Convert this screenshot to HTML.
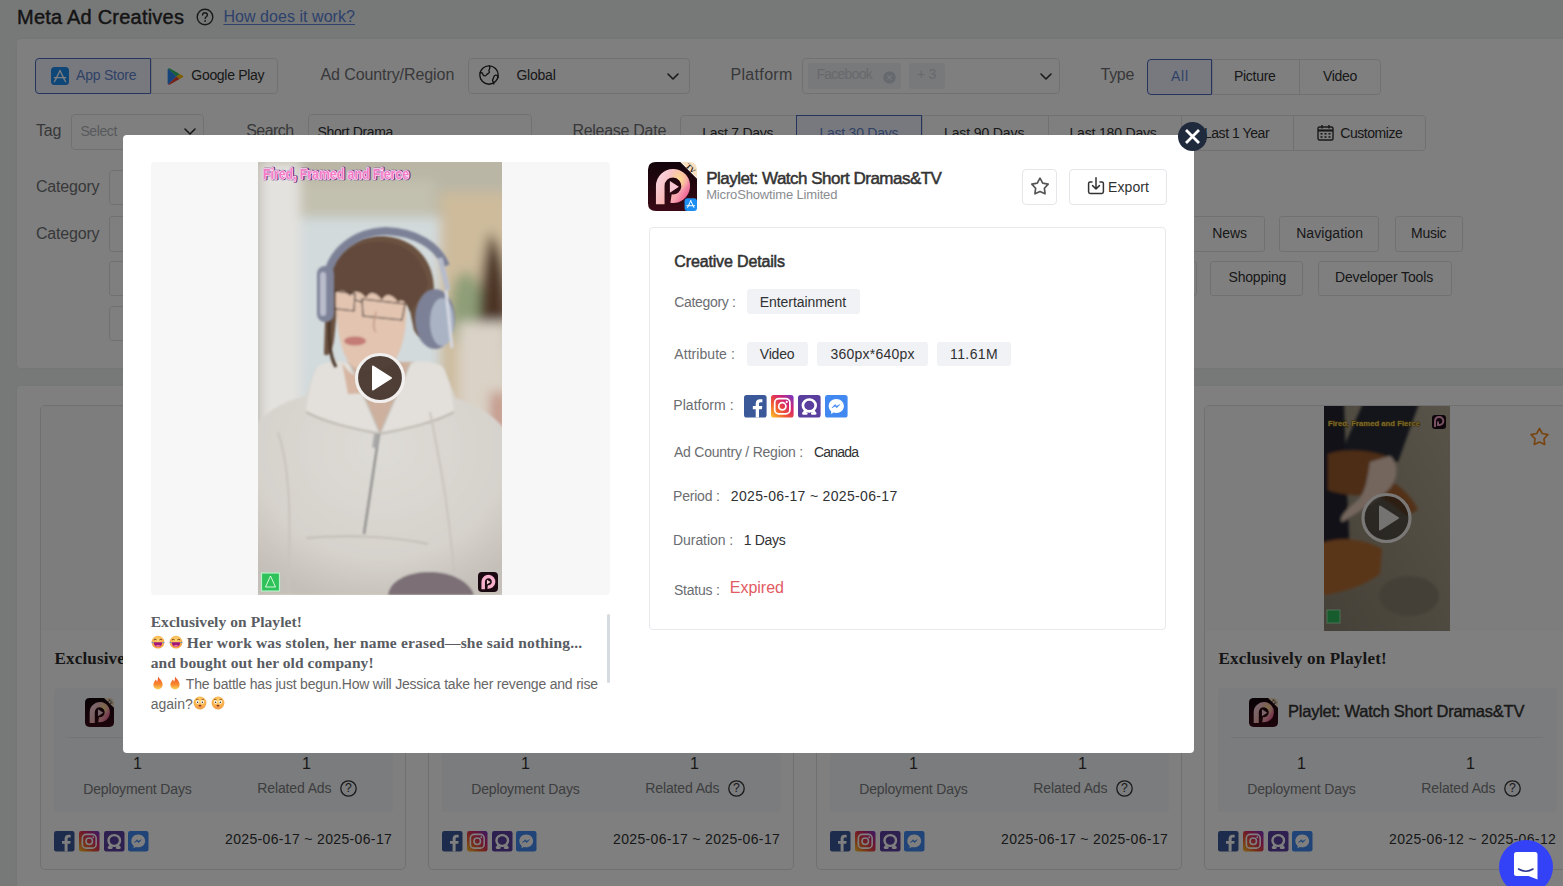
<!DOCTYPE html>
<html><head><meta charset="utf-8"><title>Meta Ad Creatives</title>
<style>
html,body{margin:0;padding:0;}
body{width:1563px;height:886px;overflow:hidden;position:relative;font-family:"Liberation Sans",sans-serif;}
.t{position:absolute;white-space:nowrap;line-height:1;}
.b{position:absolute;box-sizing:border-box;}
.s{position:absolute;overflow:visible;}
.emo{display:inline-block;position:relative;vertical-align:-1px;}
</style></head><body>
<div class="b" style="left:0.00px;top:0.00px;width:1563.00px;height:886.00px;background:#eff2f1;"></div>
<span id="t1" class="t" style="left:17.00px;top:6.77px;font-size:20px;color:#2a2a2a;font-weight:400;font-family:'Liberation Sans', sans-serif;letter-spacing:0.218px;-webkit-text-stroke:0.45px #2a2a2a;">Meta Ad Creatives</span>
<svg class="s" style="left:196.00px;top:8.00px;" width="18" height="18" viewBox="0 0 18 18"><circle cx="9" cy="9" r="7.8" fill="none" stroke="#333" stroke-width="1.4"/><path d="M6.6 7.1c0-1.4 1.1-2.3 2.4-2.3s2.4.9 2.4 2.2c0 1.7-2.3 1.9-2.3 3.6" fill="none" stroke="#333" stroke-width="1.4" stroke-linecap="round"/><circle cx="9.1" cy="13" r=".9" fill="#333"/></svg>
<span id="t2" class="t" style="left:223.50px;top:9.06px;font-size:16px;color:#5a82d8;font-weight:400;font-family:'Liberation Sans', sans-serif;letter-spacing:0.042px;text-decoration:underline;text-underline-offset:2px;">How does it work?</span>
<div class="b" style="left:17.00px;top:39.00px;width:1583.00px;height:329.00px;background:#fff;border-radius:4px;box-shadow:0 0 3px rgba(0,0,0,0.06);"></div>
<div class="b" style="left:151.00px;top:58.00px;width:127.00px;height:36.00px;background:#fff;border:1px solid #e2e3e6;border-radius:0 4px 4px 0;"></div>
<div class="b" style="left:35.00px;top:58.00px;width:116.00px;height:36.00px;background:#eef3ff;border:1px solid #4a6bbd;border-radius:4px 0 0 4px;"></div>
<svg class="s" style="left:51.00px;top:67.00px;" width="18" height="18" viewBox="0 0 18 18"><rect width="18" height="18" rx="3.5" fill="#1e8cf0"/><path d="M9 3.5 L4.6 12.6 M9 3.5 L13.4 12.6 M3.3 10.6 H14.7" stroke="#fff" stroke-width="1.3" stroke-linecap="round" fill="none"/><path d="M4.2 13.3 l-0.8 1.4 M13.8 13.3 l0.8 1.4" stroke="#fff" stroke-width="1.3" stroke-linecap="round"/></svg>
<span id="t3" class="t" style="left:76.00px;top:68.15px;font-size:14px;color:#6283cc;font-weight:400;font-family:'Liberation Sans', sans-serif;letter-spacing:-0.209px;">App Store</span>
<svg class="s" style="left:165.50px;top:66.50px;" width="19" height="19" viewBox="0 0 19 19"><path d="M2.2 1.5 Q1.6 1.9 1.6 2.8 V16.2 Q1.6 17.1 2.2 17.5 L10.5 9.5 Z" fill="#2f86f6"/><path d="M2.2 1.5 Q3 1 4 1.6 L13.6 7 L10.5 9.5 Z" fill="#2dbf6c"/><path d="M2.2 17.5 Q3 18 4 17.4 L13.6 12 L10.5 9.5 Z" fill="#ea4335"/><path d="M13.6 7 L16.9 8.8 Q18 9.5 16.9 10.2 L13.6 12 L10.5 9.5 Z" fill="#fbbc04"/></svg>
<span id="t4" class="t" style="left:191.30px;top:68.15px;font-size:14px;color:#303133;font-weight:400;font-family:'Liberation Sans', sans-serif;letter-spacing:-0.297px;">Google Play</span>
<span id="t5" class="t" style="left:320.40px;top:66.66px;font-size:16px;color:#707174;font-weight:400;font-family:'Liberation Sans', sans-serif;letter-spacing:-0.081px;">Ad Country/Region</span>
<div class="b" style="left:468.00px;top:58.00px;width:222.00px;height:36.00px;background:#fff;border:1px solid #e2e3e6;border-radius:4px;"></div>
<svg class="s" style="left:479.00px;top:65.00px;" width="21" height="21" viewBox="0 0 21 21"><circle cx="10" cy="10" r="9.2" fill="none" stroke="#222" stroke-width="1.35"/><path d="M10.5 0.8 C11.4 2.5 10.9 3.6 10 5 C9.5 6 11 6.6 10.2 7.6 C9.4 8.6 8.2 8.8 7.4 10 C6.6 11.2 5 11.2 4.3 10.2 C3.6 9.2 3.8 7.6 2.6 7.7 L0.9 8 M19.4 12.3 C18.6 10.8 17.8 10 16.6 10.2 C15.4 10.5 14.8 11.4 14.6 12.6 C14.4 13.8 13.2 14.4 13.6 15.6 C13.9 16.6 14.8 17.2 14.8 18.9" fill="none" stroke="#222" stroke-width="1.35" stroke-linecap="round" stroke-linejoin="round"/></svg>
<span id="t6" class="t" style="left:516.40px;top:68.15px;font-size:14px;color:#303133;font-weight:400;font-family:'Liberation Sans', sans-serif;letter-spacing:-0.212px;">Global</span>
<svg class="s" style="left:667.00px;top:72.50px;" width="12" height="8" viewBox="0 0 12 8"><path d="M1 1 L6 6 L11 1" fill="none" stroke="#333" stroke-width="1.6" stroke-linecap="round" stroke-linejoin="round"/></svg>
<span id="t7" class="t" style="left:730.50px;top:66.66px;font-size:16px;color:#707174;font-weight:400;font-family:'Liberation Sans', sans-serif;letter-spacing:0.323px;">Platform</span>
<div class="b" style="left:802.00px;top:58.00px;width:258.00px;height:36.00px;background:#fff;border:1px solid #e2e3e6;border-radius:4px;"></div>
<div class="b" style="left:808.00px;top:63.00px;width:93.00px;height:25.50px;background:#f0f2f6;border-radius:3px;"></div>
<span id="t8" class="t" style="left:816.40px;top:67.15px;font-size:14px;color:#d0d3da;font-weight:400;font-family:'Liberation Sans', sans-serif;letter-spacing:-0.726px;">Facebook</span>
<svg class="s" style="left:883.00px;top:70.50px;" width="13" height="13" viewBox="0 0 13 13"><circle cx="6.5" cy="6.5" r="6.2" fill="#cdd2dc"/><path d="M4.3 4.3 L8.7 8.7 M8.7 4.3 L4.3 8.7" stroke="#f0f2f6" stroke-width="1.2"/></svg>
<div class="b" style="left:909.00px;top:63.00px;width:35.50px;height:25.50px;background:#f0f2f6;border-radius:3px;"></div>
<span id="t9" class="t" style="left:917.00px;top:67.15px;font-size:14px;color:#d0d3da;font-weight:400;font-family:'Liberation Sans', sans-serif;letter-spacing:-0.283px;">+ 3</span>
<svg class="s" style="left:1040.00px;top:72.50px;" width="12" height="8" viewBox="0 0 12 8"><path d="M1 1 L6 6 L11 1" fill="none" stroke="#333" stroke-width="1.6" stroke-linecap="round" stroke-linejoin="round"/></svg>
<span id="t10" class="t" style="left:1100.50px;top:66.66px;font-size:16px;color:#707174;font-weight:400;font-family:'Liberation Sans', sans-serif;letter-spacing:-0.263px;">Type</span>
<div class="b" style="left:1212.00px;top:58.50px;width:169.00px;height:36.00px;background:#fff;border:1px solid #e2e3e6;border-radius:0 4px 4px 0;"></div>
<div class="b" style="left:1299.00px;top:58.50px;width:1.00px;height:36.00px;background:#e2e3e6;"></div>
<div class="b" style="left:1147.00px;top:58.50px;width:65.00px;height:36.00px;background:#eef3ff;border:1px solid #4a6bbd;border-radius:4px 0 0 4px;"></div>
<span id="t11" class="t" style="left:1171.00px;top:69.15px;font-size:14px;color:#6283cc;font-weight:400;font-family:'Liberation Sans', sans-serif;letter-spacing:0.776px;">All</span>
<span id="t12" class="t" style="left:1234.00px;top:69.15px;font-size:14px;color:#303133;font-weight:400;font-family:'Liberation Sans', sans-serif;letter-spacing:-0.298px;">Picture</span>
<span id="t13" class="t" style="left:1323.00px;top:69.15px;font-size:14px;color:#303133;font-weight:400;font-family:'Liberation Sans', sans-serif;letter-spacing:-0.342px;">Video</span>
<span id="t14" class="t" style="left:36.00px;top:122.96px;font-size:16px;color:#707174;font-weight:400;font-family:'Liberation Sans', sans-serif;letter-spacing:-0.199px;">Tag</span>
<div class="b" style="left:70.80px;top:114.30px;width:133.50px;height:35.70px;background:#fff;border:1px solid #e2e3e6;border-radius:4px;"></div>
<span id="t15" class="t" style="left:80.40px;top:124.15px;font-size:14px;color:#b0b3b8;font-weight:400;font-family:'Liberation Sans', sans-serif;letter-spacing:-0.404px;">Select</span>
<svg class="s" style="left:183.50px;top:128.00px;" width="12" height="8" viewBox="0 0 12 8"><path d="M1 1 L6 6 L11 1" fill="none" stroke="#333" stroke-width="1.6" stroke-linecap="round" stroke-linejoin="round"/></svg>
<span id="t16" class="t" style="left:246.20px;top:123.46px;font-size:16px;color:#707174;font-weight:400;font-family:'Liberation Sans', sans-serif;letter-spacing:-0.559px;">Search</span>
<div class="b" style="left:308.00px;top:114.30px;width:223.50px;height:35.70px;background:#fff;border:1px solid #e2e3e6;border-radius:4px;"></div>
<span id="t17" class="t" style="left:317.50px;top:125.15px;font-size:14px;color:#303133;font-weight:400;font-family:'Liberation Sans', sans-serif;letter-spacing:-0.357px;">Short Drama</span>
<span id="t18" class="t" style="left:572.40px;top:123.46px;font-size:16px;color:#707174;font-weight:400;font-family:'Liberation Sans', sans-serif;letter-spacing:-0.277px;">Release Date</span>
<div class="b" style="left:679.70px;top:115.00px;width:746.30px;height:35.50px;background:#fff;border:1px solid #e2e3e6;border-radius:4px;"></div>
<div class="b" style="left:796.20px;top:115.00px;width:1.00px;height:35.50px;background:#e2e3e6;"></div>
<div class="b" style="left:921.60px;top:115.00px;width:1.00px;height:35.50px;background:#e2e3e6;"></div>
<div class="b" style="left:1047.50px;top:115.00px;width:1.00px;height:35.50px;background:#e2e3e6;"></div>
<div class="b" style="left:1180.50px;top:115.00px;width:1.00px;height:35.50px;background:#e2e3e6;"></div>
<div class="b" style="left:1293.20px;top:115.00px;width:1.00px;height:35.50px;background:#e2e3e6;"></div>
<span id="t19" class="t" style="left:702.30px;top:126.15px;font-size:14px;color:#303133;font-weight:400;font-family:'Liberation Sans', sans-serif;letter-spacing:-0.262px;">Last 7 Days</span>
<div class="b" style="left:796.20px;top:115.00px;width:125.40px;height:35.50px;background:#eef3ff;border:1px solid #4a6bbd;"></div>
<span id="t20" class="t" style="left:819.50px;top:126.15px;font-size:14px;color:#6283cc;font-weight:400;font-family:'Liberation Sans', sans-serif;letter-spacing:-0.246px;">Last 30 Days</span>
<span id="t21" class="t" style="left:944.00px;top:126.15px;font-size:14px;color:#303133;font-weight:400;font-family:'Liberation Sans', sans-serif;letter-spacing:-0.119px;">Last 90 Days</span>
<span id="t22" class="t" style="left:1069.50px;top:126.15px;font-size:14px;color:#303133;font-weight:400;font-family:'Liberation Sans', sans-serif;letter-spacing:-0.183px;">Last 180 Days</span>
<span id="t23" class="t" style="left:1203.90px;top:126.15px;font-size:14px;color:#303133;font-weight:400;font-family:'Liberation Sans', sans-serif;letter-spacing:-0.435px;">Last 1 Year</span>
<span id="t24" class="t" style="left:1340.30px;top:126.15px;font-size:14px;color:#303133;font-weight:400;font-family:'Liberation Sans', sans-serif;letter-spacing:-0.456px;">Customize</span>
<svg class="s" style="left:1317.00px;top:123.50px;" width="17" height="17" viewBox="0 0 17 17"><rect x="1" y="3" width="15" height="13" rx="1.5" fill="none" stroke="#333" stroke-width="1.4"/><path d="M1 6.5 H16" stroke="#333" stroke-width="2.2"/><path d="M5 1 V4.5 M12 1 V4.5" stroke="#333" stroke-width="1.5"/><g fill="#333"><rect x="3.5" y="9" width="2" height="1.6"/><rect x="7.5" y="9" width="2" height="1.6"/><rect x="11.5" y="9" width="2" height="1.6"/><rect x="3.5" y="12.2" width="2" height="1.6"/><rect x="7.5" y="12.2" width="2" height="1.6"/><rect x="11.5" y="12.2" width="2" height="1.6"/></g></svg>
<span id="t25" class="t" style="left:36.00px;top:179.16px;font-size:16px;color:#707174;font-weight:400;font-family:'Liberation Sans', sans-serif;letter-spacing:-0.203px;">Category</span>
<div class="b" style="left:109.40px;top:170.00px;width:310.60px;height:34.50px;background:#fff;border:1px solid #e2e3e6;border-radius:4px;"></div>
<span id="t26" class="t" style="left:36.00px;top:226.16px;font-size:16px;color:#707174;font-weight:400;font-family:'Liberation Sans', sans-serif;letter-spacing:-0.203px;">Category</span>
<div class="b" style="left:109.40px;top:216.00px;width:90.60px;height:36.00px;background:#fff;border:1px solid #e2e3e6;border-radius:3px;"></div>
<div class="b" style="left:215.00px;top:216.00px;width:115.00px;height:36.00px;background:#fff;border:1px solid #e2e3e6;border-radius:3px;"></div>
<div class="b" style="left:345.00px;top:216.00px;width:125.00px;height:36.00px;background:#fff;border:1px solid #e2e3e6;border-radius:3px;"></div>
<div class="b" style="left:485.00px;top:216.00px;width:115.00px;height:36.00px;background:#fff;border:1px solid #e2e3e6;border-radius:3px;"></div>
<div class="b" style="left:615.00px;top:216.00px;width:125.00px;height:36.00px;background:#fff;border:1px solid #e2e3e6;border-radius:3px;"></div>
<div class="b" style="left:755.00px;top:216.00px;width:125.00px;height:36.00px;background:#fff;border:1px solid #e2e3e6;border-radius:3px;"></div>
<div class="b" style="left:895.00px;top:216.00px;width:115.00px;height:36.00px;background:#fff;border:1px solid #e2e3e6;border-radius:3px;"></div>
<div class="b" style="left:1025.00px;top:216.00px;width:125.00px;height:36.00px;background:#fff;border:1px solid #e2e3e6;border-radius:3px;"></div>
<div class="b" style="left:1165.00px;top:216.00px;width:100.10px;height:36.00px;background:#fff;border:1px solid #e2e3e6;border-radius:3px;"></div>
<span id="t27" class="t" style="left:1212.20px;top:226.15px;font-size:14px;color:#303133;font-weight:400;font-family:'Liberation Sans', sans-serif;letter-spacing:-0.069px;">News</span>
<div class="b" style="left:1279.40px;top:216.00px;width:99.80px;height:36.00px;background:#fff;border:1px solid #e2e3e6;border-radius:3px;"></div>
<span id="t28" class="t" style="left:1296.20px;top:226.15px;font-size:14px;color:#303133;font-weight:400;font-family:'Liberation Sans', sans-serif;letter-spacing:0.071px;">Navigation</span>
<div class="b" style="left:1394.60px;top:216.00px;width:68.70px;height:36.00px;background:#fff;border:1px solid #e2e3e6;border-radius:3px;"></div>
<span id="t29" class="t" style="left:1411.00px;top:226.15px;font-size:14px;color:#303133;font-weight:400;font-family:'Liberation Sans', sans-serif;letter-spacing:-0.240px;">Music</span>
<div class="b" style="left:109.40px;top:261.00px;width:120.60px;height:35.00px;background:#fff;border:1px solid #e2e3e6;border-radius:3px;"></div>
<div class="b" style="left:245.00px;top:261.00px;width:145.00px;height:35.00px;background:#fff;border:1px solid #e2e3e6;border-radius:3px;"></div>
<div class="b" style="left:405.00px;top:261.00px;width:125.00px;height:35.00px;background:#fff;border:1px solid #e2e3e6;border-radius:3px;"></div>
<div class="b" style="left:545.00px;top:261.00px;width:155.00px;height:35.00px;background:#fff;border:1px solid #e2e3e6;border-radius:3px;"></div>
<div class="b" style="left:715.00px;top:261.00px;width:145.00px;height:35.00px;background:#fff;border:1px solid #e2e3e6;border-radius:3px;"></div>
<div class="b" style="left:875.00px;top:261.00px;width:125.00px;height:35.00px;background:#fff;border:1px solid #e2e3e6;border-radius:3px;"></div>
<div class="b" style="left:1015.00px;top:261.00px;width:182.00px;height:35.00px;background:#fff;border:1px solid #e2e3e6;border-radius:3px;"></div>
<div class="b" style="left:1210.40px;top:261.00px;width:92.80px;height:35.00px;background:#fff;border:1px solid #e2e3e6;border-radius:3px;"></div>
<span id="t30" class="t" style="left:1228.60px;top:270.15px;font-size:14px;color:#303133;font-weight:400;font-family:'Liberation Sans', sans-serif;letter-spacing:-0.211px;">Shopping</span>
<div class="b" style="left:1318.40px;top:261.00px;width:133.20px;height:35.00px;background:#fff;border:1px solid #e2e3e6;border-radius:3px;"></div>
<span id="t31" class="t" style="left:1335.00px;top:270.15px;font-size:14px;color:#303133;font-weight:400;font-family:'Liberation Sans', sans-serif;letter-spacing:-0.142px;">Developer Tools</span>
<div class="b" style="left:109.40px;top:305.70px;width:140.60px;height:35.00px;background:#fff;border:1px solid #e2e3e6;border-radius:4px;"></div>
<div class="b" style="left:17.00px;top:385.50px;width:1583.00px;height:514.50px;background:#fff;border-radius:4px;box-shadow:0 0 3px rgba(0,0,0,0.06);"></div>
<div class="b" style="left:40.00px;top:405.00px;width:366.00px;height:464.50px;background:#fff;border:1px solid #e0e1e3;border-radius:5px;overflow:hidden;"><div style="position:absolute;left:0;top:0;right:0;height:225px;background:#fafafa"></div></div>
<span id="t32" class="t" style="left:54.50px;top:649.76px;font-size:17px;color:#2b2b2b;font-weight:700;font-family:'Liberation Serif', serif;letter-spacing:0.174px;">Exclusively on Playlet!</span>
<div class="b" style="left:54.00px;top:688.00px;width:339.00px;height:123.50px;background:#f7f8fa;border-radius:4px;"></div>
<svg class="s" style="left:85.00px;top:698.00px" width="29" height="29" viewBox="0 0 50 50"><defs><linearGradient id="pg1" x1="0" y1="0.2" x2="1" y2="0.9"><stop offset="0" stop-color="#f8cdd6"/><stop offset=".55" stop-color="#f7b0a8"/><stop offset=".7" stop-color="#f6a0b0"/><stop offset="1" stop-color="#ee5a90"/></linearGradient><radialGradient id="py1" cx="0.75" cy="0.2" r="0.4"><stop offset="0" stop-color="#fde08a" stop-opacity="0.9"/><stop offset="1" stop-color="#fde08a" stop-opacity="0"/></radialGradient><linearGradient id="bg1" x1="0" y1="0" x2="0" y2="1"><stop offset="0" stop-color="#12040a"/><stop offset="1" stop-color="#3a0a16"/></linearGradient></defs>
<path d="M8 0 H33 L50 17 V42 Q50 50 42 50 H8 Q0 50 0 42 V8 Q0 0 8 0 Z" fill="url(#bg1)"/>
<path d="M12.5 43 V24.5 A13 13 0 1 1 23.5 37.3" fill="none" stroke="url(#pg1)" stroke-width="8.8"/>
<path d="M12.5 43 V24.5 A13 13 0 1 1 23.5 37.3" fill="none" stroke="url(#py1)" stroke-width="8.8"/>
<path d="M22.3 19.3 L31.5 25.3 L22.3 31.4 Z" fill="#f7c8d4"/><path d="M34 0 H42 Q50 0 50 8 V16 Z" fill="#f7dfc0"/><text x="43.5" y="9" font-size="7.5" font-family="Liberation Serif" font-weight="700" fill="#2a1a10" text-anchor="middle" transform="rotate(45 43.5 6.5)">TV</text></svg>
<span id="t33" class="t" style="left:124.00px;top:703.23px;font-size:16.5px;color:#333;font-weight:400;font-family:'Liberation Sans', sans-serif;letter-spacing:-0.238px;-webkit-text-stroke:0.4px #333;">Playlet: Watch Short Dramas&amp;TV</span>
<div class="b" style="left:67.00px;top:737.00px;width:312.00px;height:1.00px;background:#e8e9ec;"></div>
<span id="t34" class="t" style="left:133.00px;top:755.96px;font-size:16px;color:#303133;font-weight:400;font-family:'Liberation Sans', sans-serif;">1</span>
<span id="t35" class="t" style="left:83.25px;top:781.75px;font-size:14px;color:#7a7c80;font-weight:400;font-family:'Liberation Sans', sans-serif;letter-spacing:-0.142px;">Deployment Days</span>
<span id="t36" class="t" style="left:257.30px;top:781.35px;font-size:14px;color:#7a7c80;font-weight:400;font-family:'Liberation Sans', sans-serif;letter-spacing:-0.127px;">Related Ads</span>
<span id="t37" class="t" style="left:302.00px;top:755.96px;font-size:16px;color:#303133;font-weight:400;font-family:'Liberation Sans', sans-serif;">1</span>
<svg class="s" style="left:340.00px;top:780.00px;" width="17" height="17" viewBox="0 0 17 17"><circle cx="8.5" cy="8.5" r="7.7" fill="none" stroke="#333" stroke-width="1.3"/><text x="8.5" y="12.41" font-size="12.24" text-anchor="middle" font-family="Liberation Sans" fill="#333">?</text></svg>
<svg class="s" style="left:54.00px;top:830.50px" width="20.5" height="20.5" viewBox="0 0 22 22"><rect width="22" height="22" rx="2.5" fill="#3b5998"/><path d="M14.6 22 V13.8 H17.4 L17.8 10.6 H14.6 V8.7 C14.6 7.8 14.9 7.1 16.2 7.1 H17.9 V4.2 C17.6 4.2 16.6 4.1 15.5 4.1 C13.1 4.1 11.4 5.6 11.4 8.3 V10.6 H8.6 V13.8 H11.4 V22 Z" fill="#fff"/></svg>
<svg class="s" style="left:78.80px;top:830.50px" width="20.5" height="20.5" viewBox="0 0 22 22"><defs><linearGradient id="igg3" x1="0" y1="1" x2="1" y2="0"><stop offset="0" stop-color="#fdc830"/><stop offset=".35" stop-color="#f0582f"/><stop offset=".65" stop-color="#d6246e"/><stop offset="1" stop-color="#6d3ac9"/></linearGradient></defs><rect width="22" height="22" rx="2.5" fill="url(#igg3)"/><rect x="3.6" y="3.6" width="14.8" height="14.8" rx="4" fill="none" stroke="#fff" stroke-width="1.7"/><circle cx="11" cy="11" r="3.5" fill="none" stroke="#fff" stroke-width="1.7"/><circle cx="15.3" cy="6.7" r="1" fill="#fff"/></svg>
<svg class="s" style="left:103.60px;top:830.50px" width="20.5" height="20.5" viewBox="0 0 22 22"><rect width="22" height="22" rx="2.5" fill="#5a3e9e"/><ellipse cx="11" cy="10.2" rx="6.2" ry="5.8" fill="none" stroke="#fff" stroke-width="2.6"/><path d="M5.2 17.8 l2.2-2.6 M16.8 17.8 l-2.2-2.6 M5.2 18 h3 M13.8 18 h3" stroke="#fff" stroke-width="2.4" stroke-linecap="round"/></svg>
<svg class="s" style="left:128.40px;top:830.50px" width="20.5" height="20.5" viewBox="0 0 22 22"><rect width="22" height="22" rx="2.5" fill="#4189f0"/><path d="M11 3.8c-4.2 0-7.4 3-7.4 6.9 0 2.1.9 3.9 2.4 5.1v2.6l2.3-1.3c.8.2 1.7.4 2.7.4 4.2 0 7.4-3 7.4-6.8S15.2 3.8 11 3.8z" fill="#fff"/><path d="M6.8 12.4 l3-3.1 1.6 1.6 3-1.6-3 3.2-1.6-1.7z" fill="#4189f0" stroke="#4189f0" stroke-width=".6" stroke-linejoin="round"/></svg>
<span id="t38" class="t" style="left:225.00px;top:832.45px;font-size:14px;color:#303133;font-weight:400;font-family:'Liberation Sans', sans-serif;letter-spacing:0.346px;">2025-06-17 ~ 2025-06-17</span>
<div class="b" style="left:428.00px;top:405.00px;width:366.00px;height:464.50px;background:#fff;border:1px solid #e0e1e3;border-radius:5px;overflow:hidden;"><div style="position:absolute;left:0;top:0;right:0;height:225px;background:#fafafa"></div></div>
<span id="t39" class="t" style="left:442.50px;top:649.76px;font-size:17px;color:#2b2b2b;font-weight:700;font-family:'Liberation Serif', serif;letter-spacing:0.174px;">Exclusively on Playlet!</span>
<div class="b" style="left:442.00px;top:688.00px;width:339.00px;height:123.50px;background:#f7f8fa;border-radius:4px;"></div>
<svg class="s" style="left:473.00px;top:698.00px" width="29" height="29" viewBox="0 0 50 50"><defs><linearGradient id="pg6" x1="0" y1="0.2" x2="1" y2="0.9"><stop offset="0" stop-color="#f8cdd6"/><stop offset=".55" stop-color="#f7b0a8"/><stop offset=".7" stop-color="#f6a0b0"/><stop offset="1" stop-color="#ee5a90"/></linearGradient><radialGradient id="py6" cx="0.75" cy="0.2" r="0.4"><stop offset="0" stop-color="#fde08a" stop-opacity="0.9"/><stop offset="1" stop-color="#fde08a" stop-opacity="0"/></radialGradient><linearGradient id="bg6" x1="0" y1="0" x2="0" y2="1"><stop offset="0" stop-color="#12040a"/><stop offset="1" stop-color="#3a0a16"/></linearGradient></defs>
<path d="M8 0 H33 L50 17 V42 Q50 50 42 50 H8 Q0 50 0 42 V8 Q0 0 8 0 Z" fill="url(#bg6)"/>
<path d="M12.5 43 V24.5 A13 13 0 1 1 23.5 37.3" fill="none" stroke="url(#pg6)" stroke-width="8.8"/>
<path d="M12.5 43 V24.5 A13 13 0 1 1 23.5 37.3" fill="none" stroke="url(#py6)" stroke-width="8.8"/>
<path d="M22.3 19.3 L31.5 25.3 L22.3 31.4 Z" fill="#f7c8d4"/><path d="M34 0 H42 Q50 0 50 8 V16 Z" fill="#f7dfc0"/><text x="43.5" y="9" font-size="7.5" font-family="Liberation Serif" font-weight="700" fill="#2a1a10" text-anchor="middle" transform="rotate(45 43.5 6.5)">TV</text></svg>
<span id="t40" class="t" style="left:512.00px;top:703.23px;font-size:16.5px;color:#333;font-weight:400;font-family:'Liberation Sans', sans-serif;letter-spacing:-0.238px;-webkit-text-stroke:0.4px #333;">Playlet: Watch Short Dramas&amp;TV</span>
<div class="b" style="left:455.00px;top:737.00px;width:312.00px;height:1.00px;background:#e8e9ec;"></div>
<span id="t41" class="t" style="left:521.00px;top:755.96px;font-size:16px;color:#303133;font-weight:400;font-family:'Liberation Sans', sans-serif;">1</span>
<span id="t42" class="t" style="left:471.25px;top:781.75px;font-size:14px;color:#7a7c80;font-weight:400;font-family:'Liberation Sans', sans-serif;letter-spacing:-0.142px;">Deployment Days</span>
<span id="t43" class="t" style="left:645.30px;top:781.35px;font-size:14px;color:#7a7c80;font-weight:400;font-family:'Liberation Sans', sans-serif;letter-spacing:-0.127px;">Related Ads</span>
<span id="t44" class="t" style="left:690.00px;top:755.96px;font-size:16px;color:#303133;font-weight:400;font-family:'Liberation Sans', sans-serif;">1</span>
<svg class="s" style="left:728.00px;top:780.00px;" width="17" height="17" viewBox="0 0 17 17"><circle cx="8.5" cy="8.5" r="7.7" fill="none" stroke="#333" stroke-width="1.3"/><text x="8.5" y="12.41" font-size="12.24" text-anchor="middle" font-family="Liberation Sans" fill="#333">?</text></svg>
<svg class="s" style="left:442.00px;top:830.50px" width="20.5" height="20.5" viewBox="0 0 22 22"><rect width="22" height="22" rx="2.5" fill="#3b5998"/><path d="M14.6 22 V13.8 H17.4 L17.8 10.6 H14.6 V8.7 C14.6 7.8 14.9 7.1 16.2 7.1 H17.9 V4.2 C17.6 4.2 16.6 4.1 15.5 4.1 C13.1 4.1 11.4 5.6 11.4 8.3 V10.6 H8.6 V13.8 H11.4 V22 Z" fill="#fff"/></svg>
<svg class="s" style="left:466.80px;top:830.50px" width="20.5" height="20.5" viewBox="0 0 22 22"><defs><linearGradient id="igg8" x1="0" y1="1" x2="1" y2="0"><stop offset="0" stop-color="#fdc830"/><stop offset=".35" stop-color="#f0582f"/><stop offset=".65" stop-color="#d6246e"/><stop offset="1" stop-color="#6d3ac9"/></linearGradient></defs><rect width="22" height="22" rx="2.5" fill="url(#igg8)"/><rect x="3.6" y="3.6" width="14.8" height="14.8" rx="4" fill="none" stroke="#fff" stroke-width="1.7"/><circle cx="11" cy="11" r="3.5" fill="none" stroke="#fff" stroke-width="1.7"/><circle cx="15.3" cy="6.7" r="1" fill="#fff"/></svg>
<svg class="s" style="left:491.60px;top:830.50px" width="20.5" height="20.5" viewBox="0 0 22 22"><rect width="22" height="22" rx="2.5" fill="#5a3e9e"/><ellipse cx="11" cy="10.2" rx="6.2" ry="5.8" fill="none" stroke="#fff" stroke-width="2.6"/><path d="M5.2 17.8 l2.2-2.6 M16.8 17.8 l-2.2-2.6 M5.2 18 h3 M13.8 18 h3" stroke="#fff" stroke-width="2.4" stroke-linecap="round"/></svg>
<svg class="s" style="left:516.40px;top:830.50px" width="20.5" height="20.5" viewBox="0 0 22 22"><rect width="22" height="22" rx="2.5" fill="#4189f0"/><path d="M11 3.8c-4.2 0-7.4 3-7.4 6.9 0 2.1.9 3.9 2.4 5.1v2.6l2.3-1.3c.8.2 1.7.4 2.7.4 4.2 0 7.4-3 7.4-6.8S15.2 3.8 11 3.8z" fill="#fff"/><path d="M6.8 12.4 l3-3.1 1.6 1.6 3-1.6-3 3.2-1.6-1.7z" fill="#4189f0" stroke="#4189f0" stroke-width=".6" stroke-linejoin="round"/></svg>
<span id="t45" class="t" style="left:613.00px;top:832.45px;font-size:14px;color:#303133;font-weight:400;font-family:'Liberation Sans', sans-serif;letter-spacing:0.346px;">2025-06-17 ~ 2025-06-17</span>
<div class="b" style="left:816.00px;top:405.00px;width:366.00px;height:464.50px;background:#fff;border:1px solid #e0e1e3;border-radius:5px;overflow:hidden;"><div style="position:absolute;left:0;top:0;right:0;height:225px;background:#fafafa"></div></div>
<span id="t46" class="t" style="left:830.50px;top:649.76px;font-size:17px;color:#2b2b2b;font-weight:700;font-family:'Liberation Serif', serif;letter-spacing:0.174px;">Exclusively on Playlet!</span>
<div class="b" style="left:830.00px;top:688.00px;width:339.00px;height:123.50px;background:#f7f8fa;border-radius:4px;"></div>
<svg class="s" style="left:861.00px;top:698.00px" width="29" height="29" viewBox="0 0 50 50"><defs><linearGradient id="pg11" x1="0" y1="0.2" x2="1" y2="0.9"><stop offset="0" stop-color="#f8cdd6"/><stop offset=".55" stop-color="#f7b0a8"/><stop offset=".7" stop-color="#f6a0b0"/><stop offset="1" stop-color="#ee5a90"/></linearGradient><radialGradient id="py11" cx="0.75" cy="0.2" r="0.4"><stop offset="0" stop-color="#fde08a" stop-opacity="0.9"/><stop offset="1" stop-color="#fde08a" stop-opacity="0"/></radialGradient><linearGradient id="bg11" x1="0" y1="0" x2="0" y2="1"><stop offset="0" stop-color="#12040a"/><stop offset="1" stop-color="#3a0a16"/></linearGradient></defs>
<path d="M8 0 H33 L50 17 V42 Q50 50 42 50 H8 Q0 50 0 42 V8 Q0 0 8 0 Z" fill="url(#bg11)"/>
<path d="M12.5 43 V24.5 A13 13 0 1 1 23.5 37.3" fill="none" stroke="url(#pg11)" stroke-width="8.8"/>
<path d="M12.5 43 V24.5 A13 13 0 1 1 23.5 37.3" fill="none" stroke="url(#py11)" stroke-width="8.8"/>
<path d="M22.3 19.3 L31.5 25.3 L22.3 31.4 Z" fill="#f7c8d4"/><path d="M34 0 H42 Q50 0 50 8 V16 Z" fill="#f7dfc0"/><text x="43.5" y="9" font-size="7.5" font-family="Liberation Serif" font-weight="700" fill="#2a1a10" text-anchor="middle" transform="rotate(45 43.5 6.5)">TV</text></svg>
<span id="t47" class="t" style="left:900.00px;top:703.23px;font-size:16.5px;color:#333;font-weight:400;font-family:'Liberation Sans', sans-serif;letter-spacing:-0.238px;-webkit-text-stroke:0.4px #333;">Playlet: Watch Short Dramas&amp;TV</span>
<div class="b" style="left:843.00px;top:737.00px;width:312.00px;height:1.00px;background:#e8e9ec;"></div>
<span id="t48" class="t" style="left:909.00px;top:755.96px;font-size:16px;color:#303133;font-weight:400;font-family:'Liberation Sans', sans-serif;">1</span>
<span id="t49" class="t" style="left:859.25px;top:781.75px;font-size:14px;color:#7a7c80;font-weight:400;font-family:'Liberation Sans', sans-serif;letter-spacing:-0.142px;">Deployment Days</span>
<span id="t50" class="t" style="left:1033.30px;top:781.35px;font-size:14px;color:#7a7c80;font-weight:400;font-family:'Liberation Sans', sans-serif;letter-spacing:-0.127px;">Related Ads</span>
<span id="t51" class="t" style="left:1078.00px;top:755.96px;font-size:16px;color:#303133;font-weight:400;font-family:'Liberation Sans', sans-serif;">1</span>
<svg class="s" style="left:1116.00px;top:780.00px;" width="17" height="17" viewBox="0 0 17 17"><circle cx="8.5" cy="8.5" r="7.7" fill="none" stroke="#333" stroke-width="1.3"/><text x="8.5" y="12.41" font-size="12.24" text-anchor="middle" font-family="Liberation Sans" fill="#333">?</text></svg>
<svg class="s" style="left:830.00px;top:830.50px" width="20.5" height="20.5" viewBox="0 0 22 22"><rect width="22" height="22" rx="2.5" fill="#3b5998"/><path d="M14.6 22 V13.8 H17.4 L17.8 10.6 H14.6 V8.7 C14.6 7.8 14.9 7.1 16.2 7.1 H17.9 V4.2 C17.6 4.2 16.6 4.1 15.5 4.1 C13.1 4.1 11.4 5.6 11.4 8.3 V10.6 H8.6 V13.8 H11.4 V22 Z" fill="#fff"/></svg>
<svg class="s" style="left:854.80px;top:830.50px" width="20.5" height="20.5" viewBox="0 0 22 22"><defs><linearGradient id="igg13" x1="0" y1="1" x2="1" y2="0"><stop offset="0" stop-color="#fdc830"/><stop offset=".35" stop-color="#f0582f"/><stop offset=".65" stop-color="#d6246e"/><stop offset="1" stop-color="#6d3ac9"/></linearGradient></defs><rect width="22" height="22" rx="2.5" fill="url(#igg13)"/><rect x="3.6" y="3.6" width="14.8" height="14.8" rx="4" fill="none" stroke="#fff" stroke-width="1.7"/><circle cx="11" cy="11" r="3.5" fill="none" stroke="#fff" stroke-width="1.7"/><circle cx="15.3" cy="6.7" r="1" fill="#fff"/></svg>
<svg class="s" style="left:879.60px;top:830.50px" width="20.5" height="20.5" viewBox="0 0 22 22"><rect width="22" height="22" rx="2.5" fill="#5a3e9e"/><ellipse cx="11" cy="10.2" rx="6.2" ry="5.8" fill="none" stroke="#fff" stroke-width="2.6"/><path d="M5.2 17.8 l2.2-2.6 M16.8 17.8 l-2.2-2.6 M5.2 18 h3 M13.8 18 h3" stroke="#fff" stroke-width="2.4" stroke-linecap="round"/></svg>
<svg class="s" style="left:904.40px;top:830.50px" width="20.5" height="20.5" viewBox="0 0 22 22"><rect width="22" height="22" rx="2.5" fill="#4189f0"/><path d="M11 3.8c-4.2 0-7.4 3-7.4 6.9 0 2.1.9 3.9 2.4 5.1v2.6l2.3-1.3c.8.2 1.7.4 2.7.4 4.2 0 7.4-3 7.4-6.8S15.2 3.8 11 3.8z" fill="#fff"/><path d="M6.8 12.4 l3-3.1 1.6 1.6 3-1.6-3 3.2-1.6-1.7z" fill="#4189f0" stroke="#4189f0" stroke-width=".6" stroke-linejoin="round"/></svg>
<span id="t52" class="t" style="left:1001.00px;top:832.45px;font-size:14px;color:#303133;font-weight:400;font-family:'Liberation Sans', sans-serif;letter-spacing:0.346px;">2025-06-17 ~ 2025-06-17</span>
<div class="b" style="left:1204.00px;top:405.00px;width:366.00px;height:464.50px;background:#fff;border:1px solid #e0e1e3;border-radius:5px;overflow:hidden;"><div style="position:absolute;left:0;top:0;right:0;height:225px;background:#fafafa"></div></div>
<span id="t53" class="t" style="left:1218.50px;top:649.76px;font-size:17px;color:#2b2b2b;font-weight:700;font-family:'Liberation Serif', serif;letter-spacing:0.174px;">Exclusively on Playlet!</span>
<div class="b" style="left:1218.00px;top:688.00px;width:339.00px;height:123.50px;background:#f7f8fa;border-radius:4px;"></div>
<svg class="s" style="left:1249.00px;top:698.00px" width="29" height="29" viewBox="0 0 50 50"><defs><linearGradient id="pg16" x1="0" y1="0.2" x2="1" y2="0.9"><stop offset="0" stop-color="#f8cdd6"/><stop offset=".55" stop-color="#f7b0a8"/><stop offset=".7" stop-color="#f6a0b0"/><stop offset="1" stop-color="#ee5a90"/></linearGradient><radialGradient id="py16" cx="0.75" cy="0.2" r="0.4"><stop offset="0" stop-color="#fde08a" stop-opacity="0.9"/><stop offset="1" stop-color="#fde08a" stop-opacity="0"/></radialGradient><linearGradient id="bg16" x1="0" y1="0" x2="0" y2="1"><stop offset="0" stop-color="#12040a"/><stop offset="1" stop-color="#3a0a16"/></linearGradient></defs>
<path d="M8 0 H33 L50 17 V42 Q50 50 42 50 H8 Q0 50 0 42 V8 Q0 0 8 0 Z" fill="url(#bg16)"/>
<path d="M12.5 43 V24.5 A13 13 0 1 1 23.5 37.3" fill="none" stroke="url(#pg16)" stroke-width="8.8"/>
<path d="M12.5 43 V24.5 A13 13 0 1 1 23.5 37.3" fill="none" stroke="url(#py16)" stroke-width="8.8"/>
<path d="M22.3 19.3 L31.5 25.3 L22.3 31.4 Z" fill="#f7c8d4"/><path d="M34 0 H42 Q50 0 50 8 V16 Z" fill="#f7dfc0"/><text x="43.5" y="9" font-size="7.5" font-family="Liberation Serif" font-weight="700" fill="#2a1a10" text-anchor="middle" transform="rotate(45 43.5 6.5)">TV</text></svg>
<span id="t54" class="t" style="left:1288.00px;top:703.23px;font-size:16.5px;color:#333;font-weight:400;font-family:'Liberation Sans', sans-serif;letter-spacing:-0.238px;-webkit-text-stroke:0.4px #333;">Playlet: Watch Short Dramas&amp;TV</span>
<div class="b" style="left:1231.00px;top:737.00px;width:312.00px;height:1.00px;background:#e8e9ec;"></div>
<span id="t55" class="t" style="left:1297.00px;top:755.96px;font-size:16px;color:#303133;font-weight:400;font-family:'Liberation Sans', sans-serif;">1</span>
<span id="t56" class="t" style="left:1247.25px;top:781.75px;font-size:14px;color:#7a7c80;font-weight:400;font-family:'Liberation Sans', sans-serif;letter-spacing:-0.142px;">Deployment Days</span>
<span id="t57" class="t" style="left:1421.30px;top:781.35px;font-size:14px;color:#7a7c80;font-weight:400;font-family:'Liberation Sans', sans-serif;letter-spacing:-0.127px;">Related Ads</span>
<span id="t58" class="t" style="left:1466.00px;top:755.96px;font-size:16px;color:#303133;font-weight:400;font-family:'Liberation Sans', sans-serif;">1</span>
<svg class="s" style="left:1504.00px;top:780.00px;" width="17" height="17" viewBox="0 0 17 17"><circle cx="8.5" cy="8.5" r="7.7" fill="none" stroke="#333" stroke-width="1.3"/><text x="8.5" y="12.41" font-size="12.24" text-anchor="middle" font-family="Liberation Sans" fill="#333">?</text></svg>
<svg class="s" style="left:1218.00px;top:830.50px" width="20.5" height="20.5" viewBox="0 0 22 22"><rect width="22" height="22" rx="2.5" fill="#3b5998"/><path d="M14.6 22 V13.8 H17.4 L17.8 10.6 H14.6 V8.7 C14.6 7.8 14.9 7.1 16.2 7.1 H17.9 V4.2 C17.6 4.2 16.6 4.1 15.5 4.1 C13.1 4.1 11.4 5.6 11.4 8.3 V10.6 H8.6 V13.8 H11.4 V22 Z" fill="#fff"/></svg>
<svg class="s" style="left:1242.80px;top:830.50px" width="20.5" height="20.5" viewBox="0 0 22 22"><defs><linearGradient id="igg18" x1="0" y1="1" x2="1" y2="0"><stop offset="0" stop-color="#fdc830"/><stop offset=".35" stop-color="#f0582f"/><stop offset=".65" stop-color="#d6246e"/><stop offset="1" stop-color="#6d3ac9"/></linearGradient></defs><rect width="22" height="22" rx="2.5" fill="url(#igg18)"/><rect x="3.6" y="3.6" width="14.8" height="14.8" rx="4" fill="none" stroke="#fff" stroke-width="1.7"/><circle cx="11" cy="11" r="3.5" fill="none" stroke="#fff" stroke-width="1.7"/><circle cx="15.3" cy="6.7" r="1" fill="#fff"/></svg>
<svg class="s" style="left:1267.60px;top:830.50px" width="20.5" height="20.5" viewBox="0 0 22 22"><rect width="22" height="22" rx="2.5" fill="#5a3e9e"/><ellipse cx="11" cy="10.2" rx="6.2" ry="5.8" fill="none" stroke="#fff" stroke-width="2.6"/><path d="M5.2 17.8 l2.2-2.6 M16.8 17.8 l-2.2-2.6 M5.2 18 h3 M13.8 18 h3" stroke="#fff" stroke-width="2.4" stroke-linecap="round"/></svg>
<svg class="s" style="left:1292.40px;top:830.50px" width="20.5" height="20.5" viewBox="0 0 22 22"><rect width="22" height="22" rx="2.5" fill="#4189f0"/><path d="M11 3.8c-4.2 0-7.4 3-7.4 6.9 0 2.1.9 3.9 2.4 5.1v2.6l2.3-1.3c.8.2 1.7.4 2.7.4 4.2 0 7.4-3 7.4-6.8S15.2 3.8 11 3.8z" fill="#fff"/><path d="M6.8 12.4 l3-3.1 1.6 1.6 3-1.6-3 3.2-1.6-1.7z" fill="#4189f0" stroke="#4189f0" stroke-width=".6" stroke-linejoin="round"/></svg>
<span id="t59" class="t" style="left:1389.00px;top:832.45px;font-size:14px;color:#303133;font-weight:400;font-family:'Liberation Sans', sans-serif;letter-spacing:0.346px;">2025-06-12 ~ 2025-06-12</span>
<svg class="s" style="left:1529.00px;top:427.00px;" width="21" height="20" viewBox="0 0 21 20"><path d="M10.50 1.50 L13.26 6.50 L18.87 7.58 L14.97 11.75 L15.67 17.42 L10.50 15.00 L5.33 17.42 L6.03 11.75 L2.13 7.58 L7.74 6.50 Z" fill="none" stroke="#f08a24" stroke-width="1.7" stroke-linejoin="round"/></svg>
<svg class="s" style="left:1324px;top:406px" width="126" height="225" viewBox="0 0 126 225"><defs><filter id="blr4" x="-20%" y="-20%" width="140%" height="140%"><feGaussianBlur stdDeviation="1.5"/></filter><clipPath id="c4"><rect width="126" height="225"/></clipPath></defs>
<g clip-path="url(#c4)">
<defs><linearGradient id="fl4" x1="1" y1="0" x2="0" y2="1"><stop offset="0" stop-color="#b2a892"/><stop offset="1" stop-color="#8c8270"/></linearGradient></defs>
<rect width="126" height="225" fill="url(#fl4)"/>
<g filter="url(#blr4)">
<path d="M-5 -5 H20 L22 60 L26 150 L20 175 L-5 178 Z" fill="#22242e"/>
<path d="M40 -5 H96 L74 56 L28 60 L20 40 Z" fill="#272a36"/>
<path d="M4 48 C20 42 45 44 62 50 L66 86 C48 92 20 90 4 84 Z" fill="#9a5a2a"/>
<path d="M56 72 C70 74 86 86 94 104 L82 110 C72 100 62 94 55 90 Z" fill="#a66430"/>
<path d="M66 50 C76 58 74 76 62 86 C50 96 32 108 18 116 C14 112 24 102 34 94 C42 86 44 70 46 56 Z" fill="#e8cdbb"/>
<path d="M-5 138 C15 130 40 132 58 143 L56 168 C40 180 20 186 -5 190 Z" fill="#b46c30"/>
<ellipse cx="85" cy="190" rx="30" ry="20" fill="#8a806e"/>
</g>
<text x="4" y="20" font-family="Liberation Sans" font-weight="700" font-size="8" fill="#f2d25a" stroke="#6a5010" stroke-width="1" paint-order="stroke" textLength="92" lengthAdjust="spacingAndGlyphs">Fired, Framed and Fierce</text>
<rect x="108" y="9" width="14" height="14" rx="3" fill="#1a0a12"/>
<path d="M111 21 V15.5 C111 12.5 113 11 115.2 11 C117.5 11 119.3 12.8 119.3 15 C119.3 17.3 117.5 19 115.2 19 H114 V15.5" fill="none" stroke="#f0a0c8" stroke-width="2"/>
<rect x="3" y="204" width="13" height="13" fill="#2fb85a" stroke="#9be0b0" stroke-width="1"/>
<circle cx="62.5" cy="112" r="23.5" fill="rgba(30,28,26,0.55)" stroke="#f4f2ee" stroke-width="3.2"/>
<path d="M56 100.5 L74 112 L56 123.5 Z" fill="#e8e6e2" stroke="#e8e6e2" stroke-width="2" stroke-linejoin="round"/>
</g></svg>
<div class="b" style="left:0.00px;top:0.00px;width:1563.00px;height:886.00px;background:rgba(0,0,0,0.5);"></div>
<div class="b" style="left:123.00px;top:135.00px;width:1071.00px;height:618.00px;background:#fff;border-radius:4px;"></div>
<div class="b" style="left:150.70px;top:162.30px;width:459.80px;height:432.40px;background:#f7f7f7;border-radius:4px;"></div>
<svg class="s" style="left:258px;top:162px" width="244" height="433" viewBox="0 0 244 433">
<defs>
<filter id="vb3" x="-20%" y="-20%" width="140%" height="140%"><feGaussianBlur stdDeviation="3"/></filter>
<filter id="vb1" x="-20%" y="-20%" width="140%" height="140%"><feGaussianBlur stdDeviation="1.2"/></filter>
<filter id="vb6" x="-30%" y="-30%" width="160%" height="160%"><feGaussianBlur stdDeviation="6"/></filter>
<linearGradient id="hood" x1="0" y1="0" x2="0" y2="1"><stop offset="0" stop-color="#e2dfda"/><stop offset="1" stop-color="#d6d3ce"/></linearGradient>
<clipPath id="vclip"><rect width="244" height="433"/></clipPath>
</defs>
<g clip-path="url(#vclip)">
<rect width="244" height="433" fill="#d8d3c8"/>
<g filter="url(#vb6)">
<rect x="-10" y="-10" width="264" height="70" fill="#b9b6a6"/>
<rect x="42" y="18" width="135" height="36" fill="#c2c0ae"/>
<rect x="38" y="55" width="144" height="220" fill="#d2dadc"/>
<rect x="-10" y="0" width="52" height="433" fill="#e4e2de"/>
<rect x="-10" y="0" width="12" height="433" fill="#b9b4ac"/>
<rect x="182" y="30" width="70" height="270" fill="#cdbb9c"/>
<ellipse cx="208" cy="150" rx="16" ry="40" fill="#8e9f78"/>
<path d="M232 70 C250 90 254 150 250 210 L226 205 C218 165 220 115 232 70Z" fill="#4e3428"/>
<rect x="200" y="160" width="50" height="130" fill="#dad2c6"/><rect x="232" y="230" width="16" height="50" fill="#c4988a"/>
</g>
<!-- hoodie -->
<defs>
<radialGradient id="hsh" cx="0.5" cy="0.35" r="0.7"><stop offset="0" stop-color="#dedbd6"/><stop offset="0.7" stop-color="#d6d2cc"/><stop offset="1" stop-color="#c4bfb8"/></radialGradient>
</defs>
<g filter="url(#vb1)">
<path d="M-5 433 L-5 268 C4 252 22 240 48 234 L58 206 L186 206 L198 236 C222 244 240 256 250 272 L250 433 Z" fill="url(#hsh)"/>
<path d="M88 200 L156 200 L122 272 Z" fill="#cdb09e"/>
<path d="M48 250 C50 232 54 214 60 204 C72 198 84 198 92 202 C102 226 112 248 122 272 C104 268 70 262 48 250 Z" fill="#e3e0db"/>
<path d="M196 250 C194 232 190 214 184 204 C172 198 160 198 152 202 C142 226 132 248 122 272 C140 268 174 262 196 250 Z" fill="#e3e0db"/>
<path d="M48 250 C70 262 104 268 122 272 C140 268 174 262 196 250" fill="none" stroke="#bfbab3" stroke-width="2.2"/>
<path d="M92 202 C102 226 112 248 122 272 C132 248 142 226 152 202" fill="none" stroke="#c4bfb8" stroke-width="1.5"/>
<path d="M20 270 C30 300 34 340 30 433" fill="none" stroke="#c8c3bc" stroke-width="2"/>
<path d="M121 272 L106 372" stroke="#8e8e8e" stroke-width="2.5"/>
<rect x="115" y="272" width="5" height="14" rx="1.5" fill="#a8a8a8" transform="rotate(8 117 279)"/>
<path d="M48 376 C90 372 140 375 170 382" fill="none" stroke="#c2beb7" stroke-width="2"/>
<path d="M172 250 C182 300 190 340 196 410" fill="none" stroke="#c9c4bd" stroke-width="2"/>
<path d="M130 433 C132 418 150 410 172 410 C194 410 212 420 216 433 Z" fill="#7b7076"/>
</g>
<!-- head -->
<g filter="url(#vb1)">
<path d="M68 130 C66 98 90 74 122 74 C154 74 176 96 176 128 L172 170 C166 178 160 176 156 168 L150 140 L80 140 L76 178 C74 190 70 196 66 192 Z" fill="#6a5141"/><path d="M72 150 C70 175 72 195 78 205" fill="none" stroke="#4a3628" stroke-width="3"/>
<path d="M78 128 L148 132 C150 160 146 185 136 200 C126 210 102 212 92 202 C82 190 77 160 78 128 Z" fill="#e2c4b0"/>
<path d="M70 120 C76 92 96 80 122 80 C146 80 164 94 170 122 C166 134 158 140 152 150 C148 140 144 136 140 140 C134 132 128 130 124 138 C118 130 112 128 108 136 C102 128 96 128 92 134 C88 128 82 126 76 132 Z" fill="#624a3a"/>
<path d="M70 128 L97 132 L96 149 L71 146 Z M104 137 L147 142 L144 158 L105 154 Z M97 138 L104 140" fill="none" stroke="#3a302e" stroke-width="1.1"/>
<path d="M118 150 C116 160 114 166 118 170" fill="none" stroke="#c49a88" stroke-width="1.5"/>
<ellipse cx="97" cy="179" rx="11" ry="4.5" fill="#c47c76"/>
<path d="M84 200 C90 215 110 222 134 208 L136 230 L90 232 Z" fill="#d6b6a2"/>
</g>
<!-- headphones -->
<g filter="url(#vb1)">
<path d="M70 112 C74 90 96 70 128 69 C158 70 180 84 188 104" fill="none" stroke="#7d8197" stroke-width="8"/>
<rect x="59" y="104" width="17" height="56" rx="8" fill="#7f8399"/>
<rect x="62" y="110" width="6" height="44" rx="3" fill="#b9bccb"/>
<ellipse cx="177" cy="157" rx="20" ry="30" fill="#7d8197"/>
<ellipse cx="184" cy="160" rx="12" ry="24" fill="#a9b3c4"/>
<path d="M188 128 L194 186" stroke="#d6d9e3" stroke-width="3"/>
<path d="M182 96 L190 128" stroke="#b7bccb" stroke-width="5"/>
</g>
<!-- title -->
<text x="5.8" y="17.3" font-family="Liberation Sans" font-weight="700" font-size="14" fill="#7a3590" stroke="#6a2a80" stroke-width="2.6" paint-order="stroke" stroke-linejoin="round" textLength="146" lengthAdjust="spacingAndGlyphs">Fired, Framed and Fierce</text>
<text x="5" y="16.5" font-family="Liberation Sans" font-weight="700" font-size="14" fill="#f27cc6" stroke="#fde6f6" stroke-width="1.6" paint-order="stroke" stroke-linejoin="round" textLength="146" lengthAdjust="spacingAndGlyphs">Fired, Framed and Fierce</text>
<!-- green badge -->
<rect x="3.5" y="411" width="18" height="18" fill="#2fc25b" stroke="#b8f0c8" stroke-width="1.2"/>
<path d="M12.5 414 L17.5 425 H7.5 Z" fill="none" stroke="#e8ffe8" stroke-width="0.9"/>
<!-- playlet small -->
<svg x="220" y="410" width="20" height="20" viewBox="0 0 50 50"><path d="M10 0 H40 Q50 0 50 10 V40 Q50 50 40 50 H10 Q0 50 0 40 V10 Q0 0 10 0Z" fill="#1a0810"/><path d="M13 43 V24.5 A13 13 0 1 1 24 37.3" fill="none" stroke="#f6b0cc" stroke-width="8.8"/><path d="M22.3 19.3 L31.5 25.3 L22.3 31.4 Z" fill="#f7c8d4"/></svg>
</g>
<!-- play button -->
<circle cx="122" cy="216" r="23.5" fill="rgba(55,42,35,0.85)" stroke="#f2f0ee" stroke-width="3.2"/>
<path d="M115 204.5 L133 216 L115 227.5 Z" fill="#fff" stroke="#fff" stroke-width="2" stroke-linejoin="round"/>
</svg>

<span id="t60" class="t" style="left:150.70px;top:614.02px;font-size:15.5px;color:#595c62;font-weight:700;font-family:'Liberation Serif', serif;letter-spacing:0.061px;">Exclusively on Playlet!</span>
<span id="t61" class="t" style="left:150.70px;top:634.52px;font-size:15.5px;color:#595c62;font-weight:700;font-family:'Liberation Serif', serif;letter-spacing:0.17px;"><svg class="emo" width="14" height="14" viewBox="0 0 14 14"><defs><radialGradient id="eyl" cx=".5" cy=".35" r=".7"><stop offset="0" stop-color="#ffd66b"/><stop offset="1" stop-color="#f59a3c"/></radialGradient></defs><circle cx="7" cy="7.2" r="6.4" fill="url(#eyl)"/><path d="M3.2 4.6 Q4.2 3.8 5.2 4.6 M8.8 4.6 Q9.8 3.8 10.8 4.6" stroke="#6a3a20" stroke-width=".9" fill="none" stroke-linecap="round"/><path d="M2.6 7.2 H11.4 Q11 11.8 7 11.8 Q3 11.8 2.6 7.2Z" fill="#a0187a"/><path d="M4.5 10.6 Q7 9.4 9.5 10.6 Q8.5 11.8 7 11.8 Q5.5 11.8 4.5 10.6Z" fill="#f07aa0"/><path d="M0.3 7.5 Q1.2 6.6 2.6 7.6 Q1.6 8.8 0.3 7.5Z M13.7 7.5 Q12.8 6.6 11.4 7.6 Q12.4 8.8 13.7 7.5Z" fill="#4aa0f0"/></svg> <svg class="emo" width="14" height="14" viewBox="0 0 14 14"><defs><radialGradient id="eyl" cx=".5" cy=".35" r=".7"><stop offset="0" stop-color="#ffd66b"/><stop offset="1" stop-color="#f59a3c"/></radialGradient></defs><circle cx="7" cy="7.2" r="6.4" fill="url(#eyl)"/><path d="M3.2 4.6 Q4.2 3.8 5.2 4.6 M8.8 4.6 Q9.8 3.8 10.8 4.6" stroke="#6a3a20" stroke-width=".9" fill="none" stroke-linecap="round"/><path d="M2.6 7.2 H11.4 Q11 11.8 7 11.8 Q3 11.8 2.6 7.2Z" fill="#a0187a"/><path d="M4.5 10.6 Q7 9.4 9.5 10.6 Q8.5 11.8 7 11.8 Q5.5 11.8 4.5 10.6Z" fill="#f07aa0"/><path d="M0.3 7.5 Q1.2 6.6 2.6 7.6 Q1.6 8.8 0.3 7.5Z M13.7 7.5 Q12.8 6.6 11.4 7.6 Q12.4 8.8 13.7 7.5Z" fill="#4aa0f0"/></svg><span style="display:inline-block;width:4px"></span>Her work was stolen, her name erased—she said nothing...</span>
<span id="t62" class="t" style="left:150.70px;top:655.42px;font-size:15.5px;color:#595c62;font-weight:700;font-family:'Liberation Serif', serif;letter-spacing:0.075px;">and bought out her old company!</span>
<span id="t63" class="t" style="left:150.70px;top:676.45px;font-size:14px;color:#666;font-weight:400;font-family:'Liberation Sans', sans-serif;letter-spacing:-0.2px;"><svg class="emo" width="14" height="14" viewBox="0 0 14 14"><defs><linearGradient id="efi" x1="0" y1="0" x2="0" y2="1"><stop offset="0" stop-color="#f0502a"/><stop offset=".6" stop-color="#f7882f"/><stop offset="1" stop-color="#fcd45a"/></linearGradient></defs><path d="M7 0.8 C8.8 3 11.6 5.2 11.6 8.8 C11.6 11.6 9.6 13.4 7 13.4 C4.4 13.4 2.4 11.6 2.4 8.8 C2.4 6.2 4 5 4.8 3.4 C5.6 4.2 6 5 6 6 C6.8 4.4 7 2.6 7 0.8Z" fill="url(#efi)"/></svg> <svg class="emo" width="14" height="14" viewBox="0 0 14 14"><defs><linearGradient id="efi" x1="0" y1="0" x2="0" y2="1"><stop offset="0" stop-color="#f0502a"/><stop offset=".6" stop-color="#f7882f"/><stop offset="1" stop-color="#fcd45a"/></linearGradient></defs><path d="M7 0.8 C8.8 3 11.6 5.2 11.6 8.8 C11.6 11.6 9.6 13.4 7 13.4 C4.4 13.4 2.4 11.6 2.4 8.8 C2.4 6.2 4 5 4.8 3.4 C5.6 4.2 6 5 6 6 C6.8 4.4 7 2.6 7 0.8Z" fill="url(#efi)"/></svg> The battle has just begun.How will Jessica take her revenge and rise</span>
<span id="t64" class="t" style="left:150.70px;top:696.45px;font-size:14px;color:#666;font-weight:400;font-family:'Liberation Sans', sans-serif;">again?<svg class="emo" width="14" height="14" viewBox="0 0 14 14"><circle cx="7" cy="7" r="6.4" fill="url(#eyl)"/><circle cx="4.6" cy="6" r="1.7" fill="#fff"/><circle cx="9.4" cy="6" r="1.7" fill="#fff"/><circle cx="4.6" cy="6.2" r=".8" fill="#3a2a20"/><circle cx="9.4" cy="6.2" r=".8" fill="#3a2a20"/><path d="M3 3.2 L5.5 3.6 M8.5 3.6 L11 3.2" stroke="#8a5020" stroke-width=".8"/><path d="M4.5 9 Q7 8 9.5 10 L8.5 13 Q6 13.6 4.4 12 Z" fill="#f0a050"/><ellipse cx="7" cy="9.6" rx="1.3" ry=".9" fill="#8a3020"/></svg> <svg class="emo" width="14" height="14" viewBox="0 0 14 14"><circle cx="7" cy="7" r="6.4" fill="url(#eyl)"/><circle cx="4.6" cy="6" r="1.7" fill="#fff"/><circle cx="9.4" cy="6" r="1.7" fill="#fff"/><circle cx="4.6" cy="6.2" r=".8" fill="#3a2a20"/><circle cx="9.4" cy="6.2" r=".8" fill="#3a2a20"/><path d="M3 3.2 L5.5 3.6 M8.5 3.6 L11 3.2" stroke="#8a5020" stroke-width=".8"/><path d="M4.5 9 Q7 8 9.5 10 L8.5 13 Q6 13.6 4.4 12 Z" fill="#f0a050"/><ellipse cx="7" cy="9.6" rx="1.3" ry=".9" fill="#8a3020"/></svg></span>
<div class="b" style="left:606.80px;top:613.70px;width:3.70px;height:69.10px;background:#d6dbe1;border-radius:2px;"></div>
<svg class="s" style="left:648.00px;top:162.00px" width="49" height="49" viewBox="0 0 50 50"><defs><linearGradient id="pg21" x1="0" y1="0.2" x2="1" y2="0.9"><stop offset="0" stop-color="#f8cdd6"/><stop offset=".55" stop-color="#f7b0a8"/><stop offset=".7" stop-color="#f6a0b0"/><stop offset="1" stop-color="#ee5a90"/></linearGradient><radialGradient id="py21" cx="0.75" cy="0.2" r="0.4"><stop offset="0" stop-color="#fde08a" stop-opacity="0.9"/><stop offset="1" stop-color="#fde08a" stop-opacity="0"/></radialGradient><linearGradient id="bg21" x1="0" y1="0" x2="0" y2="1"><stop offset="0" stop-color="#12040a"/><stop offset="1" stop-color="#3a0a16"/></linearGradient></defs>
<path d="M8 0 H33 L50 17 V42 Q50 50 42 50 H8 Q0 50 0 42 V8 Q0 0 8 0 Z" fill="url(#bg21)"/>
<path d="M12.5 43 V24.5 A13 13 0 1 1 23.5 37.3" fill="none" stroke="url(#pg21)" stroke-width="8.8"/>
<path d="M12.5 43 V24.5 A13 13 0 1 1 23.5 37.3" fill="none" stroke="url(#py21)" stroke-width="8.8"/>
<path d="M22.3 19.3 L31.5 25.3 L22.3 31.4 Z" fill="#f7c8d4"/><path d="M34 0 H42 Q50 0 50 8 V16 Z" fill="#f7dfc0"/><text x="43.5" y="9" font-size="7.5" font-family="Liberation Serif" font-weight="700" fill="#2a1a10" text-anchor="middle" transform="rotate(45 43.5 6.5)">TV</text><rect x="37.3" y="37" width="12.7" height="13" rx="3" fill="#1d8ef2"/><path d="M43.6 39.5 L40.4 46.4 M43.6 39.5 L46.8 46.4 M39.6 44.6 H47.6" stroke="#fff" stroke-width="1" stroke-linecap="round" fill="none"/></svg>
<span id="t65" class="t" style="left:706.20px;top:170.31px;font-size:17px;color:#333;font-weight:400;font-family:'Liberation Sans', sans-serif;letter-spacing:-0.515px;-webkit-text-stroke:0.5px #333;">Playlet: Watch Short Dramas&amp;TV</span>
<span id="t66" class="t" style="left:706.20px;top:188.00px;font-size:13px;color:#8a8c90;font-weight:400;font-family:'Liberation Sans', sans-serif;letter-spacing:-0.157px;">MicroShowtime Limited</span>
<div class="b" style="left:1022.30px;top:169.20px;width:35.20px;height:35.40px;background:#fff;border:1px solid #e4e6ea;border-radius:4px;"></div>
<svg class="s" style="left:1030.00px;top:176.50px;" width="20" height="19" viewBox="0 0 20 19"><path d="M10.00 1.20 L12.70 6.08 L18.18 7.14 L14.37 11.22 L15.05 16.76 L10.00 14.40 L4.95 16.76 L5.63 11.22 L1.82 7.14 L7.30 6.08 Z" fill="none" stroke="#555" stroke-width="1.7" stroke-linejoin="round"/></svg>
<div class="b" style="left:1069.30px;top:169.20px;width:97.30px;height:35.40px;background:#fff;border:1px solid #e4e6ea;border-radius:4px;"></div>
<svg class="s" style="left:1087.00px;top:176.50px;" width="18" height="18" viewBox="0 0 18 18"><path d="M5.5 5 H3.2 Q1.6 5 1.6 6.6 V14.8 Q1.6 16.4 3.2 16.4 H14.8 Q16.4 16.4 16.4 14.8 V6.6 Q16.4 5 14.8 5 H12.5" fill="none" stroke="#333" stroke-width="1.5"/><path d="M9 0.8 V12 M5.6 8.6 L9 12 L12.4 8.6" fill="none" stroke="#333" stroke-width="1.5" stroke-linecap="round" stroke-linejoin="round"/></svg>
<span id="t67" class="t" style="left:1108.00px;top:180.15px;font-size:14px;color:#303133;font-weight:400;font-family:'Liberation Sans', sans-serif;letter-spacing:0.086px;">Export</span>
<div class="b" style="left:648.60px;top:227.00px;width:517.90px;height:402.50px;background:#fff;border:1px solid #e8e9ec;border-radius:4px;"></div>
<span id="t68" class="t" style="left:674.30px;top:253.96px;font-size:16px;color:#333;font-weight:400;font-family:'Liberation Sans', sans-serif;letter-spacing:-0.149px;-webkit-text-stroke:0.55px #333;">Creative Details</span>
<span id="t69" class="t" style="left:674.30px;top:295.15px;font-size:14px;color:#6b6d71;font-weight:400;font-family:'Liberation Sans', sans-serif;letter-spacing:-0.322px;">Category :</span>
<div class="b" style="left:747.30px;top:289.40px;width:112.30px;height:24.30px;background:#f0f2f5;border-radius:3px;"></div>
<span id="t70" class="t" style="left:759.75px;top:295.15px;font-size:14px;color:#303133;font-weight:400;font-family:'Liberation Sans', sans-serif;letter-spacing:-0.064px;">Entertainment</span>
<span id="t71" class="t" style="left:674.30px;top:346.75px;font-size:14px;color:#6b6d71;font-weight:400;font-family:'Liberation Sans', sans-serif;letter-spacing:0.057px;">Attribute :</span>
<div class="b" style="left:746.50px;top:342.00px;width:61.50px;height:24.40px;background:#f0f2f5;border-radius:3px;"></div>
<span id="t72" class="t" style="left:759.75px;top:346.75px;font-size:14px;color:#303133;font-weight:400;font-family:'Liberation Sans', sans-serif;letter-spacing:-0.192px;">Video</span>
<div class="b" style="left:817.00px;top:342.00px;width:111.00px;height:24.40px;background:#f0f2f5;border-radius:3px;"></div>
<span id="t73" class="t" style="left:830.50px;top:346.75px;font-size:14px;color:#303133;font-weight:400;font-family:'Liberation Sans', sans-serif;letter-spacing:0.226px;">360px*640px</span>
<div class="b" style="left:937.00px;top:342.00px;width:74.00px;height:24.40px;background:#f0f2f5;border-radius:3px;"></div>
<span id="t74" class="t" style="left:950.00px;top:346.75px;font-size:14px;color:#303133;font-weight:400;font-family:'Liberation Sans', sans-serif;letter-spacing:0.401px;">11.61M</span>
<span id="t75" class="t" style="left:673.30px;top:398.35px;font-size:14px;color:#6b6d71;font-weight:400;font-family:'Liberation Sans', sans-serif;letter-spacing:0.043px;">Platform :</span>
<svg class="s" style="left:744.20px;top:395.00px" width="22.6" height="22.6" viewBox="0 0 22 22"><rect width="22" height="22" rx="2.5" fill="#3b5998"/><path d="M14.6 22 V13.8 H17.4 L17.8 10.6 H14.6 V8.7 C14.6 7.8 14.9 7.1 16.2 7.1 H17.9 V4.2 C17.6 4.2 16.6 4.1 15.5 4.1 C13.1 4.1 11.4 5.6 11.4 8.3 V10.6 H8.6 V13.8 H11.4 V22 Z" fill="#fff"/></svg>
<svg class="s" style="left:771.20px;top:395.00px" width="22.6" height="22.6" viewBox="0 0 22 22"><defs><linearGradient id="igg23" x1="0" y1="1" x2="1" y2="0"><stop offset="0" stop-color="#fdc830"/><stop offset=".35" stop-color="#f0582f"/><stop offset=".65" stop-color="#d6246e"/><stop offset="1" stop-color="#6d3ac9"/></linearGradient></defs><rect width="22" height="22" rx="2.5" fill="url(#igg23)"/><rect x="3.6" y="3.6" width="14.8" height="14.8" rx="4" fill="none" stroke="#fff" stroke-width="1.7"/><circle cx="11" cy="11" r="3.5" fill="none" stroke="#fff" stroke-width="1.7"/><circle cx="15.3" cy="6.7" r="1" fill="#fff"/></svg>
<svg class="s" style="left:798.20px;top:395.00px" width="22.6" height="22.6" viewBox="0 0 22 22"><rect width="22" height="22" rx="2.5" fill="#5a3e9e"/><ellipse cx="11" cy="10.2" rx="6.2" ry="5.8" fill="none" stroke="#fff" stroke-width="2.6"/><path d="M5.2 17.8 l2.2-2.6 M16.8 17.8 l-2.2-2.6 M5.2 18 h3 M13.8 18 h3" stroke="#fff" stroke-width="2.4" stroke-linecap="round"/></svg>
<svg class="s" style="left:825.20px;top:395.00px" width="22.6" height="22.6" viewBox="0 0 22 22"><rect width="22" height="22" rx="2.5" fill="#4189f0"/><path d="M11 3.8c-4.2 0-7.4 3-7.4 6.9 0 2.1.9 3.9 2.4 5.1v2.6l2.3-1.3c.8.2 1.7.4 2.7.4 4.2 0 7.4-3 7.4-6.8S15.2 3.8 11 3.8z" fill="#fff"/><path d="M6.8 12.4 l3-3.1 1.6 1.6 3-1.6-3 3.2-1.6-1.7z" fill="#4189f0" stroke="#4189f0" stroke-width=".6" stroke-linejoin="round"/></svg>
<span id="t76" class="t" style="left:674.00px;top:445.15px;font-size:14px;color:#6b6d71;font-weight:400;font-family:'Liberation Sans', sans-serif;letter-spacing:-0.233px;">Ad Country / Region :</span>
<span id="t77" class="t" style="left:814.00px;top:445.15px;font-size:14px;color:#303133;font-weight:400;font-family:'Liberation Sans', sans-serif;letter-spacing:-0.811px;">Canada</span>
<span id="t78" class="t" style="left:673.00px;top:489.25px;font-size:14px;color:#6b6d71;font-weight:400;font-family:'Liberation Sans', sans-serif;letter-spacing:-0.194px;">Period :</span>
<span id="t79" class="t" style="left:730.80px;top:489.25px;font-size:14px;color:#303133;font-weight:400;font-family:'Liberation Sans', sans-serif;letter-spacing:0.327px;">2025-06-17 ~ 2025-06-17</span>
<span id="t80" class="t" style="left:673.00px;top:532.95px;font-size:14px;color:#6b6d71;font-weight:400;font-family:'Liberation Sans', sans-serif;letter-spacing:-0.056px;">Duration :</span>
<span id="t81" class="t" style="left:743.70px;top:532.95px;font-size:14px;color:#303133;font-weight:400;font-family:'Liberation Sans', sans-serif;letter-spacing:-0.314px;">1 Days</span>
<span id="t82" class="t" style="left:674.00px;top:582.65px;font-size:14px;color:#6b6d71;font-weight:400;font-family:'Liberation Sans', sans-serif;letter-spacing:-0.226px;">Status :</span>
<span id="t83" class="t" style="left:729.80px;top:579.96px;font-size:16px;color:#e25a62;font-weight:400;font-family:'Liberation Sans', sans-serif;letter-spacing:-0.025px;">Expired</span>
<svg class="s" style="left:1178.00px;top:122.00px;" width="29" height="29" viewBox="0 0 29 29"><circle cx="14.5" cy="14.5" r="14.5" fill="#1f2a3d"/><path d="M9 9 L20 20 M20 9 L9 20" stroke="#fff" stroke-width="2.8" stroke-linecap="square"/></svg>
<svg class="s" style="left:1499.00px;top:840.00px;" width="54" height="54" viewBox="0 0 54 54"><circle cx="27" cy="27" r="27" fill="#3341f7"/><path d="M17.5 12 Q15 12 15 14.5 V33.5 Q15 36 17.5 36 H29.5 L38.5 39.5 V14.5 Q38.5 12 36 12 Z" fill="#fff"/><path d="M19.5 29 Q27 33.5 34 29" fill="none" stroke="#2a3590" stroke-width="1.5" stroke-linecap="round"/></svg>
</body></html>
